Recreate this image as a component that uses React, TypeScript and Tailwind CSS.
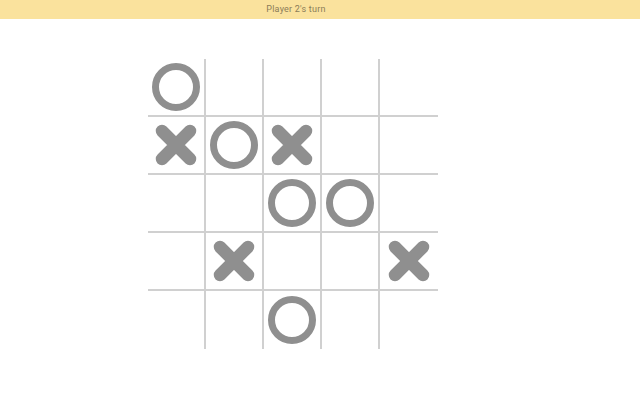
import React from 'react';

type Mark = 'X' | 'O' | null;

const board: Mark[][] = [
  ['O', null, null, null, null],
  ['X', 'O', 'X', null, null],
  [null, null, 'O', 'O', null],
  [null, 'X', null, null, 'X'],
  [null, null, 'O', null, null],
];

function Circle() {
  return (
    <svg width="50" height="50" viewBox="0 0 50 50">
      <circle cx="25" cy="25" r="20.5" fill="none" stroke="#8f8f8f" strokeWidth="7" />
    </svg>
  );
}

function Cross() {
  return (
    <svg width="46" height="46" viewBox="0 0 46 46">
      <path d="M9 9 L37 37 M37 9 L9 37" stroke="#8f8f8f" strokeWidth="12.5" strokeLinecap="round" />
    </svg>
  );
}

export default function App() {
  return (
    <div className="w-[640px] h-[400px] bg-white" style={{ fontFamily: 'Roboto, sans-serif' }}>
      <div className="h-[19px] bg-[#fae29d] flex items-center justify-center pr-[48px] text-[9px] text-[#8a7c58] tracking-wide">
        Player 2's turn
      </div>
      <div className="ml-[148px] mt-[40px] grid grid-cols-5 w-[290px]">
        {board.map((row, r) =>
          row.map((cell, c) => (
            <div
              key={`${r}-${c}`}
              className={
                'h-[58px] flex items-center justify-center border-[#d0d0d0] ' +
                (c < 4 ? 'border-r-2 ' : '') +
                (r < 4 ? 'border-b-2' : '')
              }
            >
              {cell === 'O' && <Circle />}
              {cell === 'X' && <Cross />}
            </div>
          ))
        )}
      </div>
    </div>
  );
}
